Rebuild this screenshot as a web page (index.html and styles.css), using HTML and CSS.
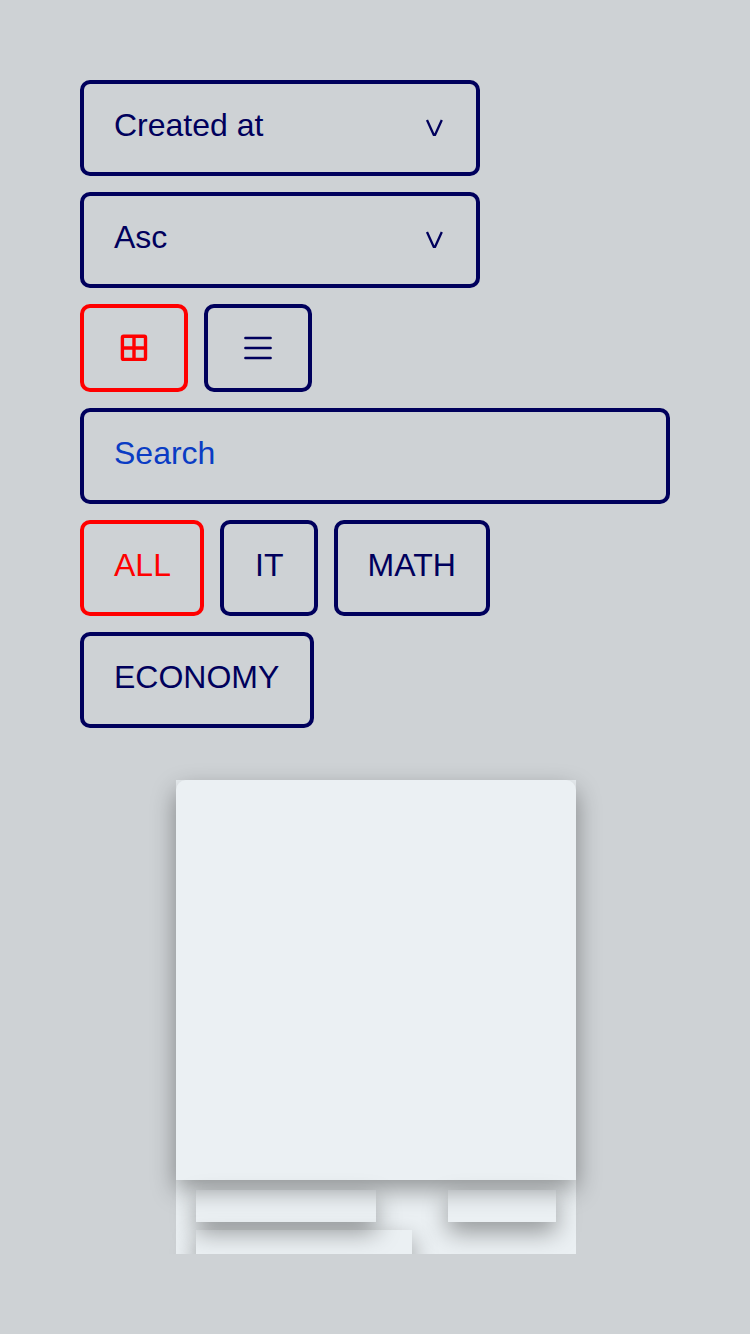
FILE: index.html
```html
<!DOCTYPE html>
<html lang="en">
<head>
<meta charset="utf-8">
<title>Articles</title>
<link rel="stylesheet" href="styles.css">
</head>
<body>
<main class="page">
  <div class="filters">
    <div class="control select"><span>Created at</span><svg class="arrow" width="18" height="18" viewBox="0 0 18 18" fill="none" stroke="currentColor" stroke-width="2.3"><path d="M2 1 8.8 15.9h1.2L16.8 1" stroke-linejoin="round"/></svg></div>
    <div class="control select"><span>Asc</span><svg class="arrow" width="18" height="18" viewBox="0 0 18 18" fill="none" stroke="currentColor" stroke-width="2.3"><path d="M2 1 8.8 15.9h1.2L16.8 1" stroke-linejoin="round"/></svg></div>
    <div class="row">
      <button class="control view active" aria-label="Grid"><svg width="40" height="40" viewBox="0 0 40 40" fill="none" stroke="currentColor" stroke-width="3.4"><rect x="8.4" y="8.3" width="23.1" height="23.1" rx="1.2"/><path d="M20 8v24M8 20h24"/></svg></button>
      <button class="control view" aria-label="List"><svg width="40" height="40" viewBox="0 0 40 40" fill="none" stroke="currentColor" stroke-width="2.5" stroke-linecap="round"><path d="M7.4 10h25.2M7.4 20h25.2M7.4 30h25.2"/></svg></button>
    </div>
    <div class="control search">Search</div>
    <div class="row">
      <button class="control tab active">ALL</button>
      <button class="control tab tab-it">IT</button>
      <button class="control tab tab-math">MATH</button>
      <button class="control tab tab-economy">ECONOMY</button>
    </div>
  </div>
  <div class="list">
    <div class="card">
      <div class="skeleton picture"></div>
      <div class="info">
        <div class="skeleton type"></div>
        <div class="skeleton views"></div>
      </div>
      <div class="skeleton title"></div>
    </div>
  </div>
</main>
</body>
</html>
```
FILE: styles.css
```css
* { box-sizing: border-box; }
body {
  margin: 0;
  height: 1334px;
  overflow: hidden;
  background: #ced2d5;
  color: #00005c;
  font: 32px/37px "Liberation Sans", Arial, sans-serif;
}
.page {
  display: flex;
  flex-direction: column;
  height: 1334px;
  padding: 80px;
}
.filters { display: flex; flex-direction: column; gap: 16px; }
.row { display: flex; flex-wrap: wrap; gap: 16px; }
.control {
  height: 96px;
  padding: 23px 30px 28px;
  border: 4px solid currentColor;
  border-radius: 10px;
  background: none;
  color: #00005c;
  font: inherit;
  white-space: nowrap;
}
.control.active { color: #ff0000; }
.select { display: flex; justify-content: space-between; width: 400px; }
.arrow { margin: 12px 3px 0 0; }
.view {
  display: flex;
  align-items: center;
  justify-content: center;
  width: 108px;
  height: 88px;
  padding: 0;
}
.control.search { color: #0a3cc4; border-color: #00005c; }
.tab { width: 124px; text-align: left; }
.tab-it { width: 98px; padding-left: 31px; }
.tab-math { width: 156px; padding-left: 29.5px; }
.tab-economy { width: 234px; }
.list {
  height: 526px;
  margin: 0 -80px;
  padding: 52px 0 0 176px;
  overflow: hidden;
}
.card { width: 400px; height: 600px; background: #ebf0f3; }
.skeleton { box-shadow: 0 10px 24px rgba(0, 0, 0, .38); }
.picture { height: 400px; border-radius: 10px 10px 0 0; }
.info { display: flex; justify-content: space-between; padding: 10px 20px 8px; }
.type { width: 180px; height: 32px; }
.views { width: 108px; height: 32px; }
.title { width: 216px; height: 32px; margin-left: 20px; }
```
